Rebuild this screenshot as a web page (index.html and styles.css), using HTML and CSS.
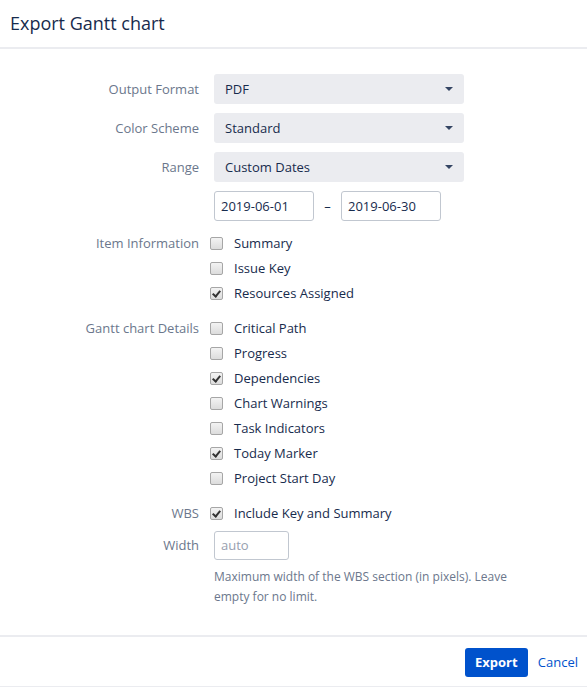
FILE: index.html
```html
<!DOCTYPE html>
<html>
<head>
<meta charset="utf-8">
<link rel="stylesheet" href="styles.css">
</head>
<body>
<div class="dialog">
  <div class="header"><h1 class="title">Export Gantt chart</h1></div>
  <div class="form">
    <div class="row sel-row">
      <div class="label">Output Format</div>
      <div class="select"><span>PDF</span><span class="caret"></span></div>
    </div>
    <div class="row sel-row">
      <div class="label">Color Scheme</div>
      <div class="select"><span>Standard</span><span class="caret"></span></div>
    </div>
    <div class="row sel-row">
      <div class="label">Range</div>
      <div class="select"><span>Custom Dates</span><span class="caret"></span></div>
    </div>
    <div class="row date-row">
      <div class="label"></div>
      <div class="dates">
        <div class="input date">2019-06-01</div>
        <span class="dash">–</span>
        <div class="input date">2019-06-30</div>
      </div>
    </div>
    <div class="row group">
      <div class="label cb-label">Item Information</div>
      <div class="checks">
        <div class="check"><span class="box"></span>Summary</div>
        <div class="check"><span class="box"></span>Issue Key</div>
        <div class="check"><span class="box on"></span>Resources Assigned</div>
      </div>
    </div>
    <div class="row group">
      <div class="label cb-label">Gantt chart Details</div>
      <div class="checks">
        <div class="check"><span class="box"></span>Critical Path</div>
        <div class="check"><span class="box"></span>Progress</div>
        <div class="check"><span class="box on"></span>Dependencies</div>
        <div class="check"><span class="box"></span>Chart Warnings</div>
        <div class="check"><span class="box"></span>Task Indicators</div>
        <div class="check"><span class="box on"></span>Today Marker</div>
        <div class="check"><span class="box"></span>Project Start Day</div>
      </div>
    </div>
    <div class="row group">
      <div class="label cb-label">WBS</div>
      <div class="checks">
        <div class="check"><span class="box on"></span>Include Key and Summary</div>
      </div>
    </div>
    <div class="row width-row">
      <div class="label">Width</div>
      <div class="width-field">
        <div class="input wbs placeholder">auto</div>
        <div class="help">Maximum width of the WBS section (in pixels). Leave empty for no limit.</div>
      </div>
    </div>
  </div>
  <div class="footer">
    <button class="btn-primary">Export</button>
    <a class="btn-link">Cancel</a>
  </div>
</div>
</body>
</html>
```
FILE: styles.css
```css
* { box-sizing: border-box; }
html, body { margin: 0; padding: 0; background: #fff; }
body {
  font-family: "Open Sans", "Noto Sans", sans-serif;
  font-size: 13px;
  color: #172b4d;
  width: 587px;
  height: 687px;
  overflow: hidden;
}
.header {
  height: 49px;
  padding-left: 10px;
  border-bottom: 2px solid #ebecf0;
  display: flex;
  align-items: center;
}
.title {
  margin: 0 0 2px 0;
  font-size: 18px;
  font-weight: 400;
  color: #172b4d;
}
.form {
  padding-top: 25px;
  height: 586px;
}
.row {
  display: grid;
  grid-template-columns: 199px 340px;
  column-gap: 15px;
}
.label {
  text-align: right;
  color: #6b778c;
  line-height: 30px;
}
.sel-row { margin-bottom: 9px; }
.select {
  width: 250px;
  height: 30px;
  background: #ebecf0;
  border-radius: 3px;
  display: flex;
  align-items: center;
  justify-content: space-between;
  padding: 0 11px 0 11px;
  color: #172b4d;
}
.caret {
  width: 0; height: 0;
  border-left: 4.5px solid transparent;
  border-right: 4.5px solid transparent;
  border-top: 4px solid #344563;
}
.dates { display: flex; align-items: center; }
.input {
  height: 30px;
  border: 1px solid #c1c7d0;
  border-radius: 3px;
  line-height: 28px;
  padding: 0 6px;
  color: #172b4d;
}
.date { width: 100px; }
.dash { width: 27px; text-align: center; color: #172b4d; }
.date-row { margin-bottom: 10px; }
.group { margin-bottom: 10px; }
.checks .check:nth-child(n+3) { }
.cb-label { line-height: 25px; }
.check {
  height: 25px;
  line-height: 25px;
  display: flex;
  align-items: center;
  color: #172b4d;
  margin-left: -4px;
}
.box {
  width: 13px; height: 13px;
  border: 1px solid #a6a6a6;
  border-radius: 2px;
  background: linear-gradient(#f3f3f3, #dcdcdc);
  margin-right: 11px;
  position: relative;
  flex: none;
}
.box.on::after {
  content: "";
  position: absolute;
  left: 3px; top: 1px;
  width: 3px; height: 6px;
  border-right: 2px solid #333;
  border-bottom: 2px solid #333;
  transform: rotate(40deg);
}
.width-row { margin-top: -5px; }
.width-row .label { line-height: 29px; }
.wbs { width: 75px; height: 29px; line-height: 27px; }
.placeholder { color: #97a0af; }
.help {
  font-size: 12px;
  line-height: 20px;
  color: #6b778c;
  margin-top: 7px;
  width: 320px;
}
.footer {
  border-top: 2px solid #ebecf0;
  border-bottom: 1px solid #ebecf0;
  height: 52px;
  display: flex;
  justify-content: flex-end;
  align-items: center;
  padding-right: 9px;
  padding-top: 1px;
}
.btn-primary {
  font-family: inherit;
  font-size: 13px;
  font-weight: 700;
  color: #fff;
  background: #0052cc;
  border: none;
  border-radius: 3px;
  height: 29px;
  width: 63px;
  padding: 0;
}
.btn-link {
  color: #0052cc;
  margin-left: 10px;
  line-height: 29px;
}
```
